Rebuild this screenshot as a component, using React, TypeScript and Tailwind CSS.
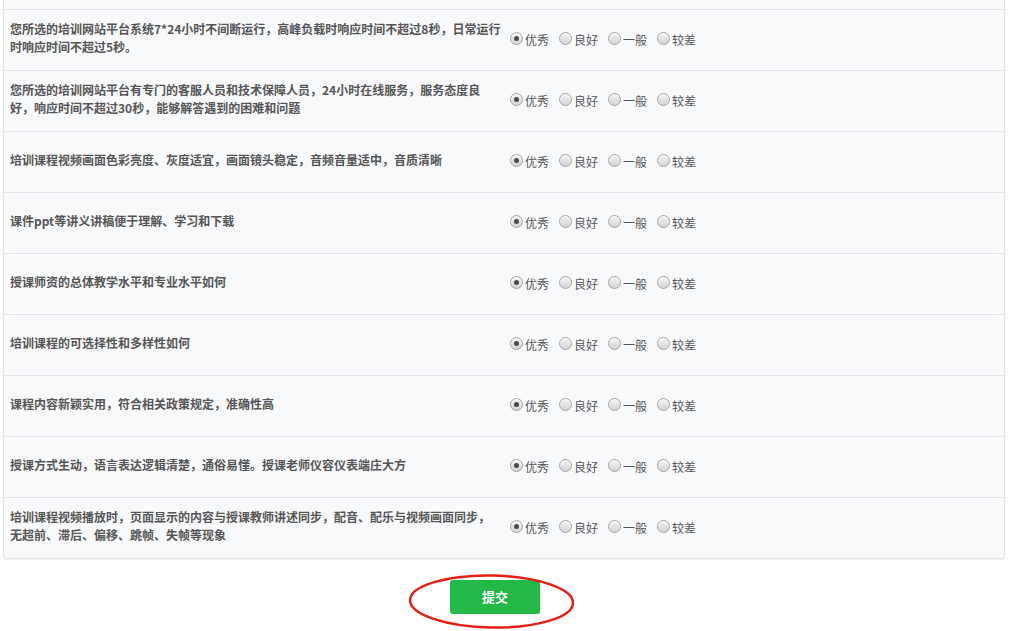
import React from "react";

const questions: string[][] = [
  ["您所选的培训网站平台系统7*24小时不间断运行，高峰负载时响应时间不超过8秒，日常运行", "时响应时间不超过5秒。"],
  ["您所选的培训网站平台有专门的客服人员和技术保障人员，24小时在线服务，服务态度良", "好，响应时间不超过30秒，能够解答遇到的困难和问题"],
  ["培训课程视频画面色彩亮度、灰度适宜，画面镜头稳定，音频音量适中，音质清晰"],
  ["课件ppt等讲义讲稿便于理解、学习和下载"],
  ["授课师资的总体教学水平和专业水平如何"],
  ["培训课程的可选择性和多样性如何"],
  ["课程内容新颖实用，符合相关政策规定，准确性高"],
  ["授课方式生动，语言表达逻辑清楚，通俗易懂。授课老师仪容仪表端庄大方"],
  ["培训课程视频播放时，页面显示的内容与授课教师讲述同步，配音、配乐与视频画面同步，", "无超前、滞后、偏移、跳帧、失帧等现象"],
];

const options = ["优秀", "良好", "一般", "较差"];

function Radio({ checked }: { checked: boolean }) {
  return (
    <span className="relative inline-flex h-[13px] w-[13px] shrink-0 items-center justify-center rounded-full border border-[#a3a3a3] bg-gradient-to-b from-[#f4f4f4] to-[#d4d4d4] shadow-[inset_0_1px_1px_rgba(255,255,255,0.9)] -translate-y-[1px]">
      {checked && <span className="h-[5px] w-[5px] rounded-full bg-[#4a4a4a]" />}
    </span>
  );
}

export default function App() {
  return (
    <div
      className="relative h-[631px] w-[1013px] overflow-hidden bg-white"
      style={{ fontFamily: '"Noto Sans CJK SC", "Microsoft YaHei", sans-serif' }}
    >
      <div className="ml-[3px] w-[1002px] rounded-b-[3px] border-x border-b border-[#e2e4e7] bg-[#f8f9fb] shadow-[0_1px_1px_rgba(0,0,0,0.06)]">
        <div className="h-[9px]" />
        {questions.map((lines, i) => (
          <div key={i} className="flex h-[61px] items-center border-t border-[#e2e4e7]">
            <div className="w-[500px] shrink-0 -translate-y-[2px] pl-[6px] text-[12px] font-bold leading-[18px] text-[#555555]">
              {lines.map((l, j) => (
                <div key={j} className="whitespace-nowrap">{l}</div>
              ))}
            </div>
            <div className="flex -translate-y-[1px] items-center pl-[6px] text-[12px] leading-[18px] text-[#555555]">
              {options.map((o, k) => (
                <label key={o} className="mr-[10px] flex items-center">
                  <Radio checked={k === 0} />
                  <span className="ml-[2px] mt-[2px]">{o}</span>
                </label>
              ))}
            </div>
          </div>
        ))}
      </div>
      <div className="mt-[21px] flex justify-center pr-[23px]">
        <button className="flex h-[34px] w-[90px] items-center justify-center rounded-[3px] bg-[#22b946] text-[13px] font-bold text-white">
          提交
        </button>
      </div>
      <svg className="pointer-events-none absolute left-[405px] top-[572px]" width="175" height="60" viewBox="0 0 175 60">
        <ellipse cx="86.5" cy="29.5" rx="81.5" ry="26" fill="none" stroke="#e61e14" strokeWidth="2.5" transform="rotate(1 86.5 29.5)" />
      </svg>
    </div>
  );
}
